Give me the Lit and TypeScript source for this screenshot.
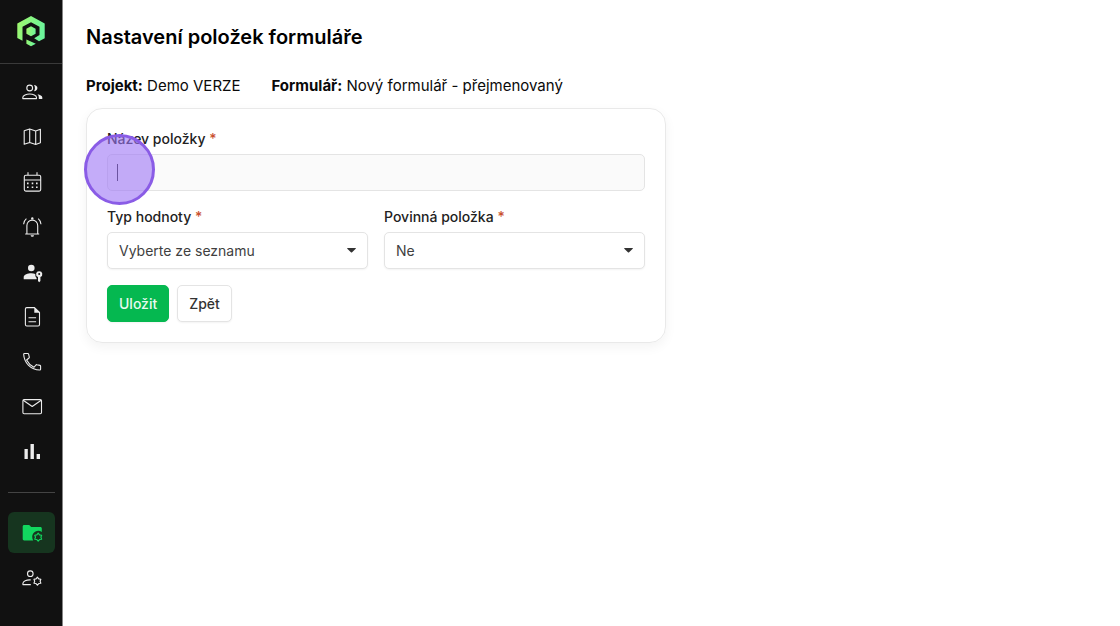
import { LitElement, html, css, svg } from "lit";
import { customElement } from "lit/decorators.js";

const GEAR = (cx: number, cy: number) => {
  const pts: string[] = [];
  for (let i = 0; i < 12; i++) {
    const r = i % 2 ? 2.7 : 4;
    const a = (Math.PI / 6) * i - Math.PI / 2;
    pts.push(`${(cx + r * Math.cos(a)).toFixed(2)},${(cy + r * Math.sin(a)).toFixed(2)}`);
  }
  return pts.join(" ");
};

const icons = {
  users: svg`<circle cx="9.7" cy="8" r="2.9"/><path d="M2.8 18.6v-1.2c0-2 3.6-3.4 6.9-3.4s6.8 1.4 6.8 3.4v1.2z"/><path class="solid" d="M14 4.9c1.9 0 3.4 1.3 3.4 3.1S15.900 11.200 14 11.200c1.300-1.800 1.300-4.500 0-6.300zM17.500 14.300c2.500.5 4.800 1.500 4.800 3.300V19h-3.500v-1.500c0-1.300-.4-2.300-1.300-3.200z"/>`,
  map: svg`<path d="M4.200 5.800 9.700 3.900l6 2 4.700-1.600v13.500l-4.700 1.700-6-2-5.500 1.800zM9.700 3.900v13.600M15.700 5.900v13.600"/>`,
  calendar: svg`<rect x="4.300" y="5.300" width="16.400" height="15.800" rx="1.500"/><path d="M4.300 10h16.400M8 5V2.200M17 5V2.200"/><path class="solid" d="M7 12.600h1.600v1.600H7zM11.700 12.600h1.600v1.600h-1.600zM16 12.600h1.600v1.600H16zM7 16.500h1.600v1.600H7zM11.700 16.500h1.600v1.600h-1.600zM16 16.500h1.600v1.600H16z"/>`,
  bell: svg`<path d="M5.200 19h14M6.900 18.800v-8.300a5.400 5.400 0 0 1 10.800 0v8.300M3.600 9.300c.1-2.300 1-4.200 2.800-5.700M21 9.300c-.1-2.300-1-4.200-2.800-5.700"/><path class="solid" d="M11.100 4.500V3.400a1.200 1.200 0 0 1 2.400 0v1.100zM10.600 20.300H14a1.700 1.500 0 0 1-3.400 0z"/>`,
  userKey: svg`<circle class="solid" cx="11.300" cy="8" r="3.300"/><path class="solid" d="M3.700 19.300v-2.100c0-2.600 4.200-4 7.600-4 1.500 0 2.900.3 4 .8-.1 2 .4 3.200 1.300 4v1.300z"/><path class="solid" fill-rule="evenodd" d="M19.200 11.200a3 3 0 0 1 1.200 5.800v4l-1.200 1.200L18 21v-4a3 3 0 0 1 1.200-5.800zm0 1.900a1 1 0 1 0 0 2 1 1 0 0 0 0-2z"/>`,
  document: svg`<path d="M14.500 2.600H6.800c-.8 0-1.400.6-1.400 1.400v15.600c0 .8.600 1.400 1.400 1.400h11.300c.8 0 1.400-.6 1.400-1.400V7.500z"/><path class="solid" d="M14.300 2.500v5.200h5.300zM8.500 12.200h7.600v1.100H8.500zM8.500 16.200h7.600v1.100H8.500z"/>`,
  phone: svg`<path d="M4.400 3.500h3.400c.4 0 .7.300.8.600l.7 3c.1.400 0 .7-.3.900L6.600 10c1.700 3.200 4.100 5.600 7.300 7.300l2.100-2.300c.3-.3.600-.4.900-.3l3.100.7c.4.100.6.400.6.800v3c0 .500-.4.800-.8.800C11 19.800 4 13 3.700 4.300c0-.5.300-.8.700-.8z"/>`,
  mail: svg`<rect x="2.900" y="4.600" width="18.600" height="14.100" rx="1.200"/><path d="m3.200 5.200 9 6.300 9-6.300"/>`,
  bars: svg`<path class="solid" d="M4.500 9h3.300v10H4.500zM10.500 4h3.400v15h-3.400zM16.600 14H20v5h-3.400z"/>`,
  folder: svg`<path class="solid" d="M4.200 5h5l2 2h9.200c.8 0 1.400.6 1.400 1.400V12a6 6 0 0 0-9.600 4.800c0 1.500.4 2.700 1 3.700h-9c-.9 0-1.500-.6-1.500-1.400V6.500C2.700 5.600 3.300 5 4.200 5z"/><polygon points=${GEAR(18.2, 17.2)}/>`,
  userGear: svg`<circle cx="10.300" cy="8.700" r="2.800"/><path d="M10.700 14.900c-4.300-.3-7.800 1.400-7.800 3.600v1.100h7.900"/><polygon points=${GEAR(17.4, 16.2)}/>`,
};

const glyph = (name: keyof typeof icons) =>
  html`<svg class="icon" viewBox="0 0 24 24" aria-hidden="true">${icons[name]}</svg>`;

@customElement("app-sidebar")
export class AppSidebar extends LitElement {
  static styles = css`
    :host { display: block; box-sizing: border-box; width: 63px; background: #111; border-right: 1px solid #858585; }
    .brand { display: flex; justify-content: center; padding: 15px 0; border-bottom: 1px solid #3a3a3a; }
    .logo { display: block; width: 28px; height: 33px; }
    .group { display: flex; flex-direction: column; gap: 4px; padding: 8px 7px 0 8px; }
    .divider { height: 1px; border: 0; margin: 19px 7px 11px 8px; background: #444; }
    .link { display: block; height: 41px; box-sizing: border-box; padding: 8px 0 0 12px; border-radius: 6px; color: #ededed; }
    .active { background: #16351f; color: #12d75f; }
    .icon { display: block; width: 24px; height: 24px; fill: none; stroke: currentColor; stroke-width: 1.1; stroke-linejoin: round; }
    .icon .solid { fill: currentColor; stroke: none; }
  `;

  private item(name: keyof typeof icons, label: string, active = false) {
    return html`<a class="link ${active ? "active" : ""}" href="#${name}" aria-label=${label}>${glyph(name)}</a>`;
  }

  render() {
    return html`
      <div class="brand">
        <svg class="logo" viewBox="0 0 28 33" aria-hidden="true">
          <defs>
            <linearGradient id="g" x1="0" y1="0" x2="1" y2="0.300">
              <stop offset="0" stop-color="#a4f76b" />
              <stop offset="1" stop-color="#6cf59a" />
            </linearGradient>
          </defs>
          <path fill="url(#g)" d="M14 1 27.700 8.500v14.800l-5.700 3-4.800-3 5.300-3.300v-8.200L14 7.200l-8.500 4.600v14L.3 23V8.500z" />
          <path fill="url(#g)" d="m14 11.300 4.600 2.500v5L14 21.300l-4.600-2.500v-5zM9.400 24.500l9.400 4.200L14 31.200l-4.600-2.500z" />
        </svg>
      </div>
      <nav>
        <div class="group">
          ${this.item("users", "Kontakty")}${this.item("map", "Mapa")}${this.item("calendar", "Kalendář")}
          ${this.item("bell", "Upozornění")}${this.item("userKey", "Oprávnění")}${this.item("document", "Dokumenty")}
          ${this.item("phone", "Hovory")}${this.item("mail", "Zprávy")}${this.item("bars", "Statistiky")}
        </div>
        <hr class="divider" />
        <div class="group">
          ${this.item("folder", "Nastavení projektu", true)}${this.item("userGear", "Nastavení uživatele")}
        </div>
      </nav>
    `;
  }
}

@customElement("app-root")
export class AppRoot extends LitElement {
  static styles = css`
    :host { display: flex; min-height: 100vh; background: #fff; color: #0a0a0a; font-family: Inter, "Liberation Sans", sans-serif; }
    .main { flex: 1; min-width: 0; padding: 24px 23px; }
    .title { margin: 0; font-size: 20px; line-height: 26px; font-weight: 600; color: #000; }
    .meta { display: flex; flex-wrap: wrap; gap: 8px 31px; margin: 25px 0 12px; font-size: 15px; line-height: 21px; }
    .meta strong { font-weight: 700; }
    .card { display: grid; grid-template-columns: 1fr 1fr; gap: 16px; box-sizing: border-box; max-width: 580px; padding: 20px; border: 1px solid #e9e9e9; border-radius: 16px; box-shadow: 0 4px 12px rgba(0, 0, 0, 0.05); }
    .field { display: flex; flex-direction: column; gap: 5px; min-width: 0; }
    .wide, .actions { grid-column: 1 / -1; }
    .label { font-size: 14px; line-height: 20px; font-weight: 500; color: #222; }
    .required { color: #c9502f; }
    .control { position: relative; display: flex; }
    .input, .select { width: 100%; height: 37px; box-sizing: border-box; padding: 0 11px; border: 1px solid #e4e4e4; border-radius: 5px; font: inherit; font-size: 14px; color: #3f3f3f; outline: none; }
    .input { background: #fafafa; }
    .select { appearance: none; background: #fff; box-shadow: 0 1px 2px rgba(0, 0, 0, 0.05); }
    .arrow { position: absolute; right: 12px; top: 16px; width: 9px; height: 5px; fill: #333; pointer-events: none; }
    .caret { position: absolute; left: 10px; top: 10px; width: 1px; height: 17px; background: #222; }
    .pointer { position: absolute; left: -23px; top: -20px; box-sizing: border-box; width: 71px; height: 71px; border: 3px solid #8a5ce6; border-radius: 50%; background: rgba(157, 117, 245, 0.600); pointer-events: none; }
    .actions { display: flex; gap: 8px; }
    .button { height: 37px; padding: 0 11px; border: 1px solid #e4e4e4; border-radius: 5px; background: #fff; color: #333; font: inherit; font-size: 14px; font-weight: 500; box-shadow: 0 1px 2px rgba(0, 0, 0, 0.05); }
    .primary { border-color: #05b850; background: #05b850; color: #e8faef; }
  `;

  private select(id: string, label: string, options: string[]) {
    return html`<div class="field">
      <label class="label" for=${id}>${label} <span class="required">*</span></label>
      <div class="control">
        <select class="select" id=${id}>${options.map((o) => html`<option>${o}</option>`)}</select>
        <svg class="arrow" viewBox="0 0 9 5" aria-hidden="true"><path d="M.500 0h8c.4 0 .5.400.2.700L5.100 4.300c-.4.300-.8.300-1.200 0L.300.700C0 .400.100 0 .500 0z" /></svg>
      </div>
    </div>`;
  }

  render() {
    return html`
      <app-sidebar></app-sidebar>
      <main class="main">
        <h1 class="title">Nastavení položek formuláře</h1>
        <div class="meta">
          <span><strong>Projekt:</strong> Demo VERZE</span>
          <span><strong>Formulář:</strong> Nový formulář - přejmenovaný</span>
        </div>
        <form class="card">
          <div class="field wide">
            <label class="label" for="name">Název položky <span class="required">*</span></label>
            <div class="control">
              <input class="input" id="name" type="text" />
              <span class="caret"></span>
              <span class="pointer"></span>
            </div>
          </div>
          ${this.select("type", "Typ hodnoty", ["Vyberte ze seznamu"])}
          ${this.select("mandatory", "Povinná položka", ["Ne", "Ano"])}
          <div class="actions">
            <button class="button primary" type="button">Uložit</button>
            <button class="button" type="button">Zpět</button>
          </div>
        </form>
      </main>
    `;
  }
}
